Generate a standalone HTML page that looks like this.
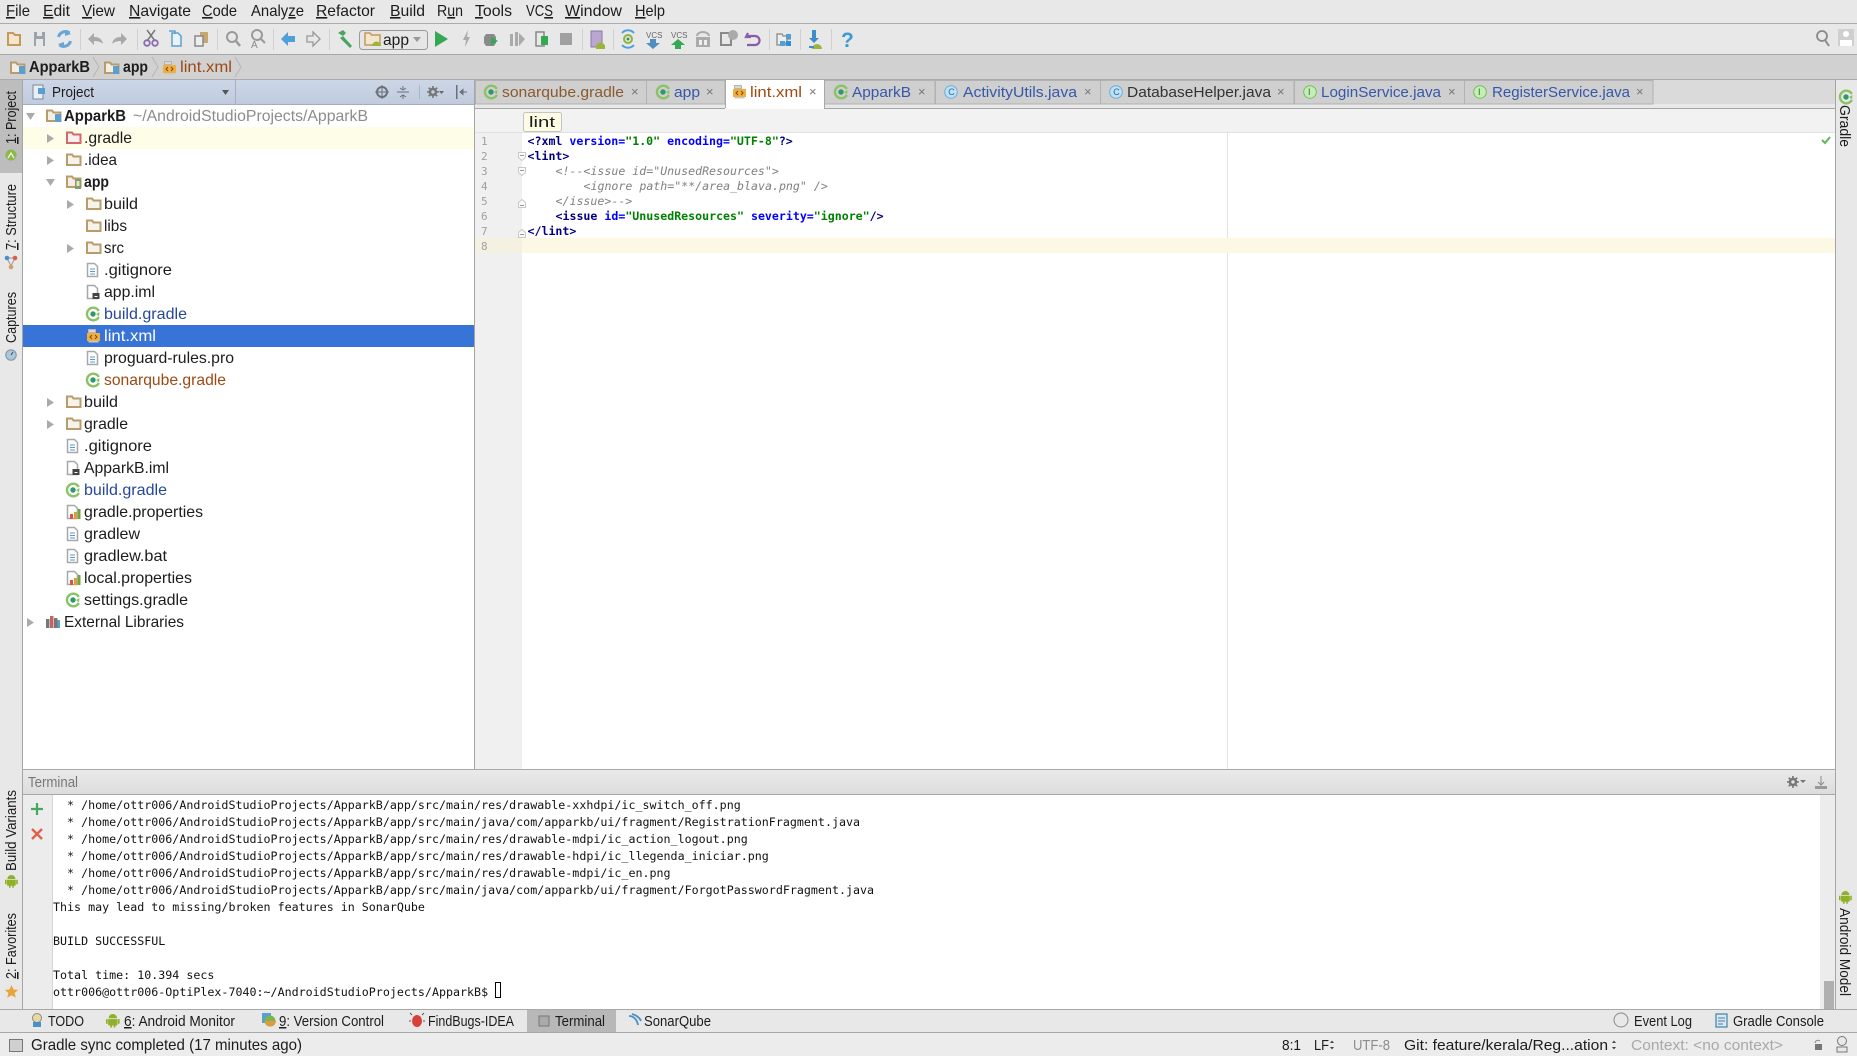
<!DOCTYPE html>
<html><head><meta charset="utf-8"><title>ApparkB</title>
<style>
html,body{margin:0;padding:0;background:#e8e8e8;width:1857px;height:1056px;overflow:hidden}
svg{display:block;filter:blur(.3px)}
text{font-family:"Liberation Sans",sans-serif;font-size:16px;fill:#1c1c1c;white-space:pre}
.m{font-family:"DejaVu Sans Mono",monospace;font-size:11.6px;fill:#000}
.t{font-family:"DejaVu Sans Mono",monospace;font-size:11.66px;fill:#111}
.b{font-weight:bold}
.g{fill:#8c8c8c}
.bl{fill:#27479c}
.br{fill:#9c4a14}
.n{fill:#000080;font-weight:bold}
.a{fill:#0000ff;font-weight:bold}
.v{fill:#008000;font-weight:bold}
.c{fill:#808080;font-style:italic}
.ln{font-family:"DejaVu Sans Mono",monospace;font-size:11px;fill:#a0a0a0}
.s{font-size:15px}
.x{font-size:13px;fill:#777}
.u{text-decoration:underline}
</style></head><body>
<svg xmlns="http://www.w3.org/2000/svg" width="1857" height="1056" viewBox="0 0 1857 1056">
<defs>
<linearGradient id="hd" x1="0" y1="0" x2="0" y2="1"><stop offset="0" stop-color="#ccd6e6"/><stop offset="1" stop-color="#bfcbde"/></linearGradient>
<linearGradient id="th" x1="0" y1="0" x2="0" y2="1"><stop offset="0" stop-color="#eaeaea"/><stop offset="1" stop-color="#dcdcdc"/></linearGradient>
<g id="fo"><path d="M1 2.500h5l1.500 2H14.500v8.500H1z" fill="#f6f3ea" stroke="#b89c6b" stroke-width="2"/></g>
<g id="for"><path d="M1 2.500h5l1.500 2H14.500v8.500H1z" fill="#fbeeee" stroke="#cf6a6a" stroke-width="2"/></g>
<g id="fom"><path d="M1 2.500h5l1.500 2H14.500v8.500H1z" fill="#f3efe4" stroke="#b89c6b" stroke-width="2"/><rect x="9" y="6" width="6" height="8" fill="#5b9fd0"/></g>
<g id="foa"><path d="M1 2.500h5l1.500 2H14.500v8.500H1z" fill="#f3efe4" stroke="#b89c6b" stroke-width="2"/><rect x="9" y="5" width="6" height="10" fill="#8a9a66"/><rect x="10.500" y="7" width="3" height="5" fill="#dfe8c9"/></g>
<g id="fi"><path d="M2.500 1.500h7l3 3v10h-10z" fill="#fff" stroke="#a8a8a8" stroke-width="1.500"/><path d="M5 7h5M5 9.500h5M5 12h5" stroke="#5a9cc8"/></g>
<g id="fm"><path d="M2.500 1.500h7l3 3v10h-10z" fill="#fff" stroke="#a8a8a8" stroke-width="1.500"/><rect x="7.500" y="9" width="7" height="6" fill="#444"/><rect x="9.500" y="12" width="3" height="1" fill="#fff"/></g>
<g id="fp"><path d="M2.500 1.500h7l3 3v10h-10z" fill="#fff" stroke="#a8a8a8" stroke-width="1.500"/><rect x="5" y="10" width="3" height="5" fill="#d9534a"/><rect x="9" y="8" width="3" height="7" fill="#e0a030"/><rect x="13" y="5" width="2.500" height="10" fill="#6aaa3a"/></g>
<g id="gr"><path d="M13.800 5A6.300 6.300 0 1 0 13.800 11" fill="none" stroke="#8cc265" stroke-width="2.400"/><path d="M14.500 6L14 10.500L11 8z" fill="#8cc265"/><circle cx="8" cy="8" r="2.700" fill="#2e9a6a"/></g>
<g id="xm"><path d="M2.500 1.500h7v3h-7z" fill="#d8d8d8" stroke="#b5b5b5"/><rect x="1" y="5" width="13" height="8" fill="#f0b040"/><path d="M6 7l-2 2 2 2M9 7l2 2-2 2" fill="none" stroke="#8a4a00" stroke-width="1.100"/><rect x="2.500" y="13" width="10" height="1.500" fill="#c8c8c8"/></g>
<g id="lib"><rect x="1" y="5" width="3.500" height="9" fill="#777"/><rect x="5" y="2" width="3.500" height="12" fill="#c0655f"/><rect x="9" y="4" width="3.500" height="10" fill="#777"/><rect x="12.500" y="6" width="2.500" height="8" fill="#5b9fd0"/></g>
<path id="ar" d="M0 0l7 4.500-7 4.500z" fill="#aaaaaa"/>
<path id="ad" d="M0 0h9l-4.500 7z" fill="#aaaaaa"/>
<g id="cc"><circle cx="7" cy="8" r="6.300" fill="#bfe0f5" stroke="#6aaed6"/><text x="4.200" y="11" style="font-size:9px;fill:#2a6a96">C</text></g>
<g id="ci"><circle cx="7" cy="8" r="6.300" fill="#c5edb8" stroke="#72bf5a"/><text x="5" y="11" style="font-size:9px;fill:#2f6a20">I</text></g>
<g id="dr"><path d="M3 5a5 5 0 0 1 10 0zM2.500 6h11v6a1.500 1.500 0 0 1-1.500 1.500H4A1.500 1.500 0 0 1 2.500 12zM0 6h2v5.500H0zM14 6h2v5.500h-2zM5 13h2v3H5zM9 13h2v3H9z" fill="#8fb128"/></g>
<g id="gear"><circle cx="7" cy="7" r="3.500" fill="none" stroke="#777" stroke-width="3"/><path d="M7 0v3M7 11v3M0 7h3M11 7h3M2 2l2 2M10 10l2 2M12 2l-2 2M4 10l-2 2" stroke="#777" stroke-width="2"/></g>
</defs>

<rect width="1857" height="1056" fill="#e8e8e8"/>

<!-- menu -->
<rect x="0" y="23" width="1857" height="1" fill="#ababab"/>
<text x="6" y="16" textLength="24" lengthAdjust="spacingAndGlyphs"><tspan class="u">F</tspan>ile</text>
<text x="43" y="16" textLength="27" lengthAdjust="spacingAndGlyphs"><tspan class="u">E</tspan>dit</text>
<text x="82" y="16" textLength="33" lengthAdjust="spacingAndGlyphs"><tspan class="u">V</tspan>iew</text>
<text x="129" y="16" textLength="62" lengthAdjust="spacingAndGlyphs"><tspan class="u">N</tspan>avigate</text>
<text x="202" y="16" textLength="35" lengthAdjust="spacingAndGlyphs"><tspan class="u">C</tspan>ode</text>
<text x="251" y="16" textLength="53" lengthAdjust="spacingAndGlyphs">Analy<tspan class="u">z</tspan>e</text>
<text x="316" y="16" textLength="59" lengthAdjust="spacingAndGlyphs"><tspan class="u">R</tspan>efactor</text>
<text x="390" y="16" textLength="35" lengthAdjust="spacingAndGlyphs"><tspan class="u">B</tspan>uild</text>
<text x="437" y="16" textLength="26" lengthAdjust="spacingAndGlyphs">R<tspan class="u">u</tspan>n</text>
<text x="475" y="16" textLength="37" lengthAdjust="spacingAndGlyphs"><tspan class="u">T</tspan>ools</text>
<text x="526" y="16" textLength="27" lengthAdjust="spacingAndGlyphs">VC<tspan class="u">S</tspan></text>
<text x="565" y="16" textLength="57" lengthAdjust="spacingAndGlyphs"><tspan class="u">W</tspan>indow</text>
<text x="635" y="16" textLength="30" lengthAdjust="spacingAndGlyphs"><tspan class="u">H</tspan>elp</text>

<!-- toolbar -->
<rect x="0" y="54" width="1857" height="1" fill="#a8a8a8"/>
<g fill="none" stroke="#d0d0d0"><path d="M80.500 29v21M137.500 29v21M217.500 29v21M273.500 29v21M329.500 29v21M582.500 29v21M613.500 29v21M769.500 29v21M800.500 29v21M831.500 29v21"/></g>
<path d="M8 33h5l2 2h5v10H8z" fill="#f3e6cc" stroke="#c49a5c" stroke-width="2"/>
<path d="M34 32h11v14H34z" fill="#9aa4ac"/><rect x="37" y="32" width="5" height="4" fill="#e8e8e8"/><rect x="36" y="39" width="7" height="7" fill="#e8e8e8"/>
<path d="M69.500 33a7 7 0 0 0-11 4M59.500 45a7 7 0 0 0 11-4" fill="none" stroke="#6aa5d8" stroke-width="3"/><path d="M65 30l6 4-6 2zM64 48l-6-4 6-2z" fill="#6aa5d8"/>
<path d="M88 39l6-6v4c5 0 8 2 9 7-2-2-5-3-9-3v4z" fill="#a8a8a8"/>
<path d="M127 39l-6-6v4c-5 0-8 2-9 7 2-2 5-3 9-3v4z" fill="#a8a8a8"/>
<path d="M147 30l8 11M155 30l-8 11" stroke="#777" stroke-width="1.500"/><circle cx="147" cy="43" r="2.800" fill="none" stroke="#8a6ab0" stroke-width="1.800"/><circle cx="155" cy="43" r="2.800" fill="none" stroke="#8a6ab0" stroke-width="1.800"/>
<path d="M172 33h6l3 3v10h-9z" fill="#e8f2fa" stroke="#5f9fcc" stroke-width="1.500"/><path d="M169 31h6v3" fill="none" stroke="#5f9fcc" stroke-width="1.500"/>
<rect x="200" y="32" width="8" height="11" fill="#c6a76e"/><path d="M195 36h8v10h-8z" fill="#eee" stroke="#888" stroke-width="1.500"/>
<circle cx="232" cy="37" r="5" fill="none" stroke="#9a9a9a" stroke-width="2"/><path d="M236 41l4 5" stroke="#9a9a9a" stroke-width="2.500"/>
<circle cx="257" cy="35" r="5" fill="none" stroke="#9a9a9a" stroke-width="2"/><path d="M261 39l4 4" stroke="#9a9a9a" stroke-width="2"/><text x="251" y="48" style="font-size:10px;fill:#888">A</text>
<path d="M281 39l7-7v4h7v6h-7v4z" fill="#4fa0d8"/>
<path d="M320 39l-7-7v4h-6v6h6v4z" fill="#e8e8e8" stroke="#999" stroke-width="1.300"/>
<path d="M338 33l5-3 3 3-3 3zM343 36l9 10-2 2-10-10z" fill="#4aa360"/>
<rect x="359.500" y="30.500" width="68" height="19" rx="3" fill="#e6e6e6" stroke="#9a9a9a"/>
<path d="M365 33h5l1.500 2H380v10h-15z" fill="#f3e6cc" stroke="#c49a5c" stroke-width="1.500"/><path d="M372 45a4.500 4.500 0 0 1 9 0z" fill="#9ab53a" transform="translate(0 1)"/>
<text x="383" y="45" textLength="26" lengthAdjust="spacingAndGlyphs">app</text>
<path d="M413 37h8l-4 5z" fill="#999"/>
<path d="M435 31l13 8-13 8z" fill="#34a853"/>
<path d="M468 30l-5 10h3l-1 7 5-10h-3z" fill="#aaa"/>
<path d="M486 34h8l2 3v6l-2 3h-8l-2-3v-6z" fill="#8a8a8a"/><path d="M491 37l7 4-7 4z" fill="#34a853"/>
<rect x="510" y="34" width="3" height="12" fill="#aaa"/><rect x="515" y="32" width="3" height="14" fill="#aaa"/><path d="M519 33l6 6-6 7z" fill="#aaa"/>
<path d="M536 32h8v14h-8z" fill="none" stroke="#888" stroke-width="1.500"/><path d="M541 36h7v9h-7z" fill="#34a853"/>
<rect x="560" y="33" width="12" height="12" fill="#a0a0a0"/>
<rect x="591" y="31" width="11" height="16" fill="#b9a7d0" stroke="#8a78a8"/><path d="M596 47a4.500 4.500 0 0 1 9 0z" fill="#9ab53a"/><rect x="596" y="45" width="9" height="4" fill="#9ab53a"/>
<path d="M634 33a8 8 0 0 0-12 0M622 45a8 8 0 0 0 12 0" fill="none" stroke="#4fa0d8" stroke-width="2"/><circle cx="628" cy="39" r="4" fill="none" stroke="#8cb53a" stroke-width="2"/><circle cx="628" cy="39" r="1.500" fill="#2e9a6a"/>
<text x="646" y="38" style="font-size:8px;fill:#666">VCS</text><path d="M650 39h6v4h4l-7 6-7-6h4z" fill="#4f8fc0"/>
<text x="671" y="38" style="font-size:8px;fill:#666">VCS</text><path d="M678 39l7 6h-4v4h-6v-4h-4z" fill="#34a853"/>
<path d="M697 36a6 4 0 0 1 12 0" fill="none" stroke="#aaa" stroke-width="2"/><rect x="696" y="37" width="14" height="10" fill="#aaa"/><rect x="699" y="40" width="3" height="5" fill="#eee"/><rect x="704" y="40" width="3" height="5" fill="#eee"/>
<rect x="721" y="33" width="10" height="12" fill="#e8e8e8" stroke="#8a8a8a" stroke-width="2"/><circle cx="733" cy="35" r="5" fill="#aaa"/>
<path d="M748 33l-2 4 5 0M747 36h8a4.500 4.500 0 0 1 0 9h-8" fill="none" stroke="#8a5ba8" stroke-width="2.200"/>
<path d="M777 34h5l1 2h7v3h-3v4h-2v2h-8z" fill="#eee" stroke="#888" stroke-width="1.300"/><rect x="786" y="34" width="5" height="5" fill="#4fa0d8"/><rect x="786" y="41" width="5" height="5" fill="#2e8fd8"/><rect x="780" y="41" width="5" height="5" fill="#4fa0d8"/>
<path d="M812 30h4v8h3l-5 5-5-5h3z" fill="#3a8fcb"/><path d="M812 47a4.500 4.500 0 0 1 10 0z" fill="#9ab53a" transform="translate(0 2)"/><rect x="809" y="46" width="5" height="2" fill="#3a8fcb"/>
<text x="841" y="47" style="font-size:21px;font-weight:bold;fill:#3a9ad8">?</text>
<circle cx="1822" cy="36" r="5" fill="none" stroke="#8a8a8a" stroke-width="1.800"/><path d="M1825 40l4 6" stroke="#8a8a8a" stroke-width="2"/>
<rect x="1838" y="29" width="16" height="17" fill="#cfcfcf"/><circle cx="1846" cy="34" r="3" fill="#fff"/><path d="M1840 46v-6h12v6z" fill="#fff"/>

<!-- breadcrumb -->
<rect x="0" y="55" width="1857" height="25" fill="#d1d1d1"/>
<rect x="0" y="79" width="1857" height="1" fill="#aaaaaa"/>
<use href="#fom" x="10" y="60"/><text class="b" x="29" y="72" textLength="61" lengthAdjust="spacingAndGlyphs">ApparkB</text>
<path d="M93 57l6 10-6 10" fill="none" stroke="#b5b5b5"/>
<use href="#fom" x="104" y="60"/><text class="b" x="123" y="72" textLength="25" lengthAdjust="spacingAndGlyphs">app</text>
<path d="M152 57l6 10-6 10" fill="none" stroke="#b5b5b5"/>
<use href="#xm" x="162" y="60"/><text class="br" x="180" y="72" textLength="52" lengthAdjust="spacingAndGlyphs">lint.xml</text>
<path d="M235 57l6 10-6 10" fill="none" stroke="#b5b5b5"/>

<!-- left strip -->
<rect x="0" y="80" width="22" height="690" fill="#e8e8e8"/>
<rect x="0" y="80" width="22" height="93" fill="#bdbdbd"/>
<rect x="22" y="80" width="1" height="930" fill="#a5a5a5"/>
<text class="s" transform="rotate(-90 16 144)" x="16" y="144" textLength="53" lengthAdjust="spacingAndGlyphs"><tspan class="u">1</tspan>: Project</text>
<circle cx="11" cy="155" r="5.500" fill="#8eb84a"/><path d="M8 158l3-5 3 5" fill="none" stroke="#eee" stroke-width="1.300"/>
<text class="s" transform="rotate(-90 16 250)" x="16" y="250" textLength="66" lengthAdjust="spacingAndGlyphs"><tspan class="u">7</tspan>: Structure</text>
<path d="M7 258L11 266L15 258z" fill="none" stroke="#999"/><circle cx="7" cy="258" r="2.300" fill="#4a90c8"/><circle cx="15" cy="258" r="2.300" fill="#d95a4a"/><circle cx="11" cy="267" r="2.300" fill="#d99a5a"/>
<text class="s" transform="rotate(-90 16 343)" x="16" y="343" textLength="51" lengthAdjust="spacingAndGlyphs">Captures</text>
<circle cx="11" cy="355" r="5.200" fill="#a8c8de" stroke="#8a9aa8" stroke-width="1.200"/><path d="M11 355l2-3" stroke="#446"/>
<text class="s" transform="rotate(-90 16 871)" x="16" y="871" textLength="81" lengthAdjust="spacingAndGlyphs">Build Variants</text>
<use href="#dr" transform="translate(5 875) scale(.8)"/>
<text class="s" transform="rotate(-90 16 979)" x="16" y="979" textLength="66" lengthAdjust="spacingAndGlyphs"><tspan class="u">2</tspan>: Favorites</text>
<path d="M11.500 985l2 4.500 4.800.4-3.700 3.100 1.200 4.700-4.300-2.500-4.300 2.500 1.200-4.700-3.700-3.100 4.800-.4z" fill="#e8a33d"/>

<!-- project panel -->
<rect x="23" y="80" width="451" height="25" fill="url(#hd)"/>
<rect x="23" y="104" width="451" height="1" fill="#a5adba"/>
<rect x="235" y="80" width="1" height="24" fill="#a6b0c0"/>
<rect x="33" y="85" width="10" height="14" fill="#e8eef5" stroke="#7a8a9a"/><rect x="38" y="88" width="7" height="6" fill="#5b9fd0"/>
<text class="s" x="52" y="97" textLength="42" lengthAdjust="spacingAndGlyphs">Project</text>
<path d="M222 90h7l-3.500 5z" fill="#555"/>
<circle cx="382" cy="92" r="5" fill="none" stroke="#6a7078" stroke-width="2"/><path d="M382 85v14M375 92h14" stroke="#6a7078"/>
<path d="M403 86v3M400 88l3 2 3-2M397 92h12M400 97l3-2 3 2M403 95v4" stroke="#6a7078" fill="none"/>
<rect x="419" y="85" width="1" height="14" fill="#aab4c2"/>
<use href="#gear" transform="translate(427 86) scale(.85)"/><path d="M439 91h5l-2.500 3z" fill="#666"/>
<rect x="456" y="85" width="1.500" height="14" fill="#6a7078"/><path d="M460 92h7M460 92l3-2.500v5z" stroke="#6a7078" fill="#6a7078"/>

<rect x="23" y="105" width="451" height="665" fill="#fff"/>
<rect x="23" y="127" width="451" height="22" fill="#fdfde8"/>
<rect x="23" y="325" width="451" height="22" fill="#3874d7"/>
<rect x="474" y="80" width="1" height="690" fill="#a5a5a5"/>

<use href="#ad" x="26" y="113"/><use href="#fom" x="46" y="108"/>
<text class="b" x="64" y="121" textLength="62" lengthAdjust="spacingAndGlyphs">ApparkB</text>
<text class="g" x="133" y="121" textLength="235" lengthAdjust="spacingAndGlyphs">~/AndroidStudioProjects/ApparkB</text>
<use href="#ar" x="47" y="134"/><use href="#for" x="66" y="130"/><text x="84" y="143" textLength="48" lengthAdjust="spacingAndGlyphs">.gradle</text>
<use href="#ar" x="47" y="156"/><use href="#fo" x="66" y="152"/><text x="84" y="165" textLength="33" lengthAdjust="spacingAndGlyphs">.idea</text>
<use href="#ad" x="46" y="179"/><use href="#foa" x="66" y="174"/><text class="b" x="84" y="187" textLength="25" lengthAdjust="spacingAndGlyphs">app</text>
<use href="#ar" x="67" y="200"/><use href="#fo" x="86" y="196"/><text x="104" y="209" textLength="34" lengthAdjust="spacingAndGlyphs">build</text>
<use href="#fo" x="86" y="218"/><text x="104" y="231" textLength="23" lengthAdjust="spacingAndGlyphs">libs</text>
<use href="#ar" x="67" y="244"/><use href="#fo" x="86" y="240"/><text x="104" y="253" textLength="20" lengthAdjust="spacingAndGlyphs">src</text>
<use href="#fi" x="85" y="262"/><text x="104" y="275" textLength="68" lengthAdjust="spacingAndGlyphs">.gitignore</text>
<use href="#fm" x="85" y="284"/><text x="104" y="297" textLength="51" lengthAdjust="spacingAndGlyphs">app.iml</text>
<use href="#gr" x="85" y="306"/><text class="bl" x="104" y="319" textLength="83" lengthAdjust="spacingAndGlyphs">build.gradle</text>
<use href="#xm" x="86" y="328"/><text style="fill:#fff" x="104" y="341" textLength="52" lengthAdjust="spacingAndGlyphs">lint.xml</text>
<use href="#fi" x="85" y="350"/><text x="104" y="363" textLength="130" lengthAdjust="spacingAndGlyphs">proguard-rules.pro</text>
<use href="#gr" x="85" y="372"/><text class="br" x="104" y="385" textLength="122" lengthAdjust="spacingAndGlyphs">sonarqube.gradle</text>
<use href="#ar" x="47" y="398"/><use href="#fo" x="66" y="394"/><text x="84" y="407" textLength="34" lengthAdjust="spacingAndGlyphs">build</text>
<use href="#ar" x="47" y="420"/><use href="#fo" x="66" y="416"/><text x="84" y="429" textLength="44" lengthAdjust="spacingAndGlyphs">gradle</text>
<use href="#fi" x="65" y="438"/><text x="84" y="451" textLength="68" lengthAdjust="spacingAndGlyphs">.gitignore</text>
<use href="#fm" x="65" y="460"/><text x="84" y="473" textLength="85" lengthAdjust="spacingAndGlyphs">ApparkB.iml</text>
<use href="#gr" x="65" y="482"/><text class="bl" x="84" y="495" textLength="83" lengthAdjust="spacingAndGlyphs">build.gradle</text>
<use href="#fp" x="65" y="504"/><text x="84" y="517" textLength="119" lengthAdjust="spacingAndGlyphs">gradle.properties</text>
<use href="#fi" x="65" y="526"/><text x="84" y="539" textLength="56" lengthAdjust="spacingAndGlyphs">gradlew</text>
<use href="#fi" x="65" y="548"/><text x="84" y="561" textLength="83" lengthAdjust="spacingAndGlyphs">gradlew.bat</text>
<use href="#fp" x="65" y="570"/><text x="84" y="583" textLength="108" lengthAdjust="spacingAndGlyphs">local.properties</text>
<use href="#gr" x="65" y="592"/><text x="84" y="605" textLength="104" lengthAdjust="spacingAndGlyphs">settings.gradle</text>
<use href="#ar" x="27" y="618"/><use href="#lib" x="45" y="614"/><text x="64" y="627" textLength="120" lengthAdjust="spacingAndGlyphs">External Libraries</text>

<!-- tabs -->
<rect x="475" y="80" width="1360" height="24" fill="#dadada"/>
<rect x="475" y="104" width="1360" height="4" fill="#e9e9e9"/>
<rect x="475" y="108" width="1360" height="1" fill="#a6a6a6"/>
<g fill="#cfcfcf" stroke="#b2b2b2">
<path d="M475.500 80.500h171v23.500h-171z"/><path d="M646.500 80.500h78.500v23.500h-78.500z"/><path d="M824.500 80.500h110.500v23.500h-110.500z"/><path d="M935.500 80.500h165v23.500h-165z"/><path d="M1100.500 80.500h193.500v23.500h-193.500z"/><path d="M1294.500 80.500h170v23.500h-170z"/><path d="M1464.500 80.500h188.500v23.500h-188.500z"/>
</g>
<rect x="725" y="80" width="99" height="29" fill="#fff"/>
<rect x="725" y="80" width="1" height="28" fill="#a8a8a8"/><rect x="824" y="80" width="1" height="28" fill="#a8a8a8"/>
<use href="#gr" x="483" y="84"/><text class="s" style="fill:#8a5a2e" x="502" y="97" textLength="122" lengthAdjust="spacingAndGlyphs">sonarqube.gradle</text><text class="x" x="631" y="96">×</text>
<use href="#gr" x="655" y="84"/><text class="s" style="fill:#3558a8" x="674" y="97" textLength="26" lengthAdjust="spacingAndGlyphs">app</text><text class="x" x="706" y="96">×</text>
<use href="#xm" x="732" y="84"/><text class="s" style="fill:#a04a12" x="750" y="97" textLength="52" lengthAdjust="spacingAndGlyphs">lint.xml</text><text class="x" x="809" y="96">×</text>
<use href="#gr" x="833" y="84"/><text class="s" style="fill:#3558a8" x="852" y="97" textLength="59" lengthAdjust="spacingAndGlyphs">ApparkB</text><text class="x" x="918" y="96">×</text>
<use href="#cc" x="944" y="84"/><text class="s" style="fill:#3558a8" x="963" y="97" textLength="114" lengthAdjust="spacingAndGlyphs">ActivityUtils.java</text><text class="x" x="1084" y="96">×</text>
<use href="#cc" x="1109" y="84"/><text class="s" style="fill:#333" x="1127" y="97" textLength="144" lengthAdjust="spacingAndGlyphs">DatabaseHelper.java</text><text class="x" x="1277" y="96">×</text>
<use href="#ci" x="1303" y="84"/><text class="s" style="fill:#3558a8" x="1321" y="97" textLength="120" lengthAdjust="spacingAndGlyphs">LoginService.java</text><text class="x" x="1448" y="96">×</text>
<use href="#ci" x="1473" y="84"/><text class="s" style="fill:#3558a8" x="1492" y="97" textLength="138" lengthAdjust="spacingAndGlyphs">RegisterService.java</text><text class="x" x="1636" y="96">×</text>

<!-- editor -->
<rect x="475" y="109" width="1360" height="24" fill="#f2f2f2"/>
<rect x="475" y="132" width="1360" height="1" fill="#e2e2e2"/>
<rect x="523.500" y="112.500" width="38" height="19" rx="2" fill="#fdfbe4" stroke="#c4c4c4"/>
<text class="s" x="529" y="127" textLength="26" lengthAdjust="spacingAndGlyphs">lint</text>
<rect x="475" y="133" width="47" height="637" fill="#f0f0f0"/>
<rect x="522" y="133" width="1313" height="637" fill="#fff"/>
<rect x="1227" y="133" width="1" height="637" fill="#e2e2e2"/>
<rect x="475" y="238" width="47" height="15" fill="#f4f1e2"/>
<rect x="522" y="238" width="1313" height="15" fill="#fcf8e3"/>
<path d="M1822 140l3 3 5-6" fill="none" stroke="#5cb85c" stroke-width="2"/>
<text class="ln" x="481" y="145">1</text><text class="ln" x="481" y="160">2</text><text class="ln" x="481" y="175">3</text><text class="ln" x="481" y="190">4</text><text class="ln" x="481" y="205">5</text><text class="ln" x="481" y="220">6</text><text class="ln" x="481" y="235">7</text><text class="ln" x="481" y="250">8</text>
<g fill="#fafafa" stroke="#c8c8c8"><path d="M518.500 152.500h7v5l-3.500 3-3.500-3z"/><path d="M518.500 167.500h7v5l-3.500 3-3.500-3z"/><path d="M518.500 202.500l3.500-3 3.500 3v5h-7z"/><path d="M518.500 232.500l3.500-3 3.500 3v5h-7z"/></g>
<path d="M520 155.500h4M520 170.500h4M520 205.500h4M520 234.500h4" stroke="#999"/>
<text class="m" x="527.500" y="145"><tspan class="n">&lt;?xml </tspan><tspan class="a">version=</tspan><tspan class="v">"1.0" </tspan><tspan class="a">encoding=</tspan><tspan class="v">"UTF-8"</tspan><tspan class="n">?&gt;</tspan></text>
<text class="m n" x="527.500" y="160">&lt;lint&gt;</text>
<text class="m c" x="555.500" y="175">&lt;!--&lt;issue id="UnusedResources"&gt;</text>
<text class="m c" x="583.500" y="190">&lt;ignore path="**/area_blava.png" /&gt;</text>
<text class="m c" x="555.500" y="205">&lt;/issue&gt;--&gt;</text>
<text class="m" x="555.500" y="220"><tspan class="n">&lt;issue </tspan><tspan class="a">id=</tspan><tspan class="v">"UnusedResources" </tspan><tspan class="a">severity=</tspan><tspan class="v">"ignore"</tspan><tspan class="n">/&gt;</tspan></text>
<text class="m n" x="527.500" y="235">&lt;/lint&gt;</text>

<!-- right strip -->
<rect x="1835" y="80" width="1" height="930" fill="#a5a5a5"/>
<use href="#gr" x="1838" y="89"/>
<text class="s" transform="rotate(90 1840 105)" x="1840" y="105" textLength="42" lengthAdjust="spacingAndGlyphs">Gradle</text>
<use href="#dr" transform="translate(1839 891) scale(.8)"/>
<text class="s" transform="rotate(90 1840 908)" x="1840" y="908" textLength="88" lengthAdjust="spacingAndGlyphs">Android Model</text>

<!-- terminal -->
<rect x="23" y="769" width="1812" height="1" fill="#a8a8a8"/>
<rect x="23" y="770" width="1812" height="24" fill="url(#th)"/>
<rect x="23" y="794" width="1812" height="1" fill="#a8a8a8"/>
<text class="s" style="fill:#777" x="28" y="787" textLength="50" lengthAdjust="spacingAndGlyphs">Terminal</text>
<use href="#gear" transform="translate(1787 776) scale(.85)"/><path d="M1800 780h6l-3 3z" fill="#777"/>
<path d="M1821 776v9M1818 782l3 3 3-3" stroke="#888" fill="none"/><rect x="1815" y="786" width="12" height="3" fill="#999"/>
<rect x="23" y="795" width="29" height="214" fill="#ececec"/>
<rect x="52" y="795" width="1" height="214" fill="#d4d4d4"/>
<rect x="53" y="795" width="1767" height="214" fill="#fff"/>
<rect x="1820" y="795" width="15" height="214" fill="#ececec"/>
<rect x="1824" y="981" width="10" height="28" fill="#b0b0b0"/>
<path d="M37 803v12M31 809h12" stroke="#45a85a" stroke-width="2.200"/>
<path d="M32 829l10 10M42 829l-10 10" stroke="#e0604a" stroke-width="2.400"/>
<text class="t" x="53" y="809">  * /home/ottr006/AndroidStudioProjects/ApparkB/app/src/main/res/drawable-xxhdpi/ic_switch_off.png</text>
<text class="t" x="53" y="826">  * /home/ottr006/AndroidStudioProjects/ApparkB/app/src/main/java/com/apparkb/ui/fragment/RegistrationFragment.java</text>
<text class="t" x="53" y="843">  * /home/ottr006/AndroidStudioProjects/ApparkB/app/src/main/res/drawable-mdpi/ic_action_logout.png</text>
<text class="t" x="53" y="860">  * /home/ottr006/AndroidStudioProjects/ApparkB/app/src/main/res/drawable-hdpi/ic_llegenda_iniciar.png</text>
<text class="t" x="53" y="877">  * /home/ottr006/AndroidStudioProjects/ApparkB/app/src/main/res/drawable-mdpi/ic_en.png</text>
<text class="t" x="53" y="894">  * /home/ottr006/AndroidStudioProjects/ApparkB/app/src/main/java/com/apparkb/ui/fragment/ForgotPasswordFragment.java</text>
<text class="t" x="53" y="911">This may lead to missing/broken features in SonarQube</text>
<text class="t" x="53" y="945">BUILD SUCCESSFUL</text>
<text class="t" x="53" y="979">Total time: 10.394 secs</text>
<text class="t" x="53" y="996">ottr006@ottr006-OptiPlex-7040:~/AndroidStudioProjects/ApparkB$</text>
<rect x="495.500" y="982.500" width="5" height="15" fill="#fff" stroke="#000"/>

<!-- tool window bar -->
<rect x="0" y="1009" width="1857" height="1" fill="#a8a8a8"/>
<rect x="0" y="1010" width="1857" height="22" fill="#e8e8e8"/>
<rect x="0" y="1032" width="1857" height="1" fill="#a8a8a8"/>
<rect x="527" y="1010" width="89" height="22" fill="#b8b8b8"/>
<circle cx="37" cy="1018" r="4.500" fill="#e8d8a0" stroke="#8a8a8a"/><rect x="33" y="1022" width="8" height="5" fill="#4a90c8"/>
<text class="s" x="48" y="1026" textLength="36" lengthAdjust="spacingAndGlyphs">TODO</text>
<use href="#dr" transform="translate(106 1014) scale(.85)"/>
<text class="s" x="124" y="1026" textLength="111" lengthAdjust="spacingAndGlyphs"><tspan class="u">6</tspan>: Android Monitor</text>
<rect x="262" y="1013" width="9" height="10" fill="#5b9fd0"/><circle cx="270" cy="1021" r="5.500" fill="#7ab648"/><path d="M265 1021a5.500 5.500 0 0 0 11 0z" fill="#e09a40"/>
<text class="s" x="279" y="1026" textLength="105" lengthAdjust="spacingAndGlyphs"><tspan class="u">9</tspan>: Version Control</text>
<ellipse cx="417" cy="1021" rx="5" ry="6" fill="#d8403a"/><path d="M412 1015l-2-2M422 1015l2-2M411 1021h-2M423 1021h2" stroke="#555"/>
<text class="s" x="428" y="1026" textLength="86" lengthAdjust="spacingAndGlyphs">FindBugs-IDEA</text>
<rect x="539" y="1016" width="10" height="10" fill="#aaa" stroke="#777"/>
<text class="s" x="555" y="1026" textLength="50" lengthAdjust="spacingAndGlyphs">Terminal</text>
<path d="M629 1016c4 0 8 3 9 9M632 1014c4 1 8 4 9 7" fill="none" stroke="#4a90c8" stroke-width="1.800"/>
<text class="s" x="644" y="1026" textLength="67" lengthAdjust="spacingAndGlyphs">SonarQube</text>
<circle cx="1621" cy="1020" r="7" fill="none" stroke="#8a8a8a"/>
<text class="s" x="1634" y="1026" textLength="58" lengthAdjust="spacingAndGlyphs">Event Log</text>
<rect x="1716" y="1014" width="11" height="13" fill="#dbe8f2" stroke="#4a8ab0" stroke-width="1.300"/><path d="M1718 1018h7M1718 1021h7M1718 1024h5" stroke="#4a7a9a"/>
<text class="s" x="1733" y="1026" textLength="91" lengthAdjust="spacingAndGlyphs">Gradle Console</text>

<!-- status bar -->
<rect x="0" y="1033" width="1857" height="23" fill="#ececec"/>
<rect x="9.500" y="1039.500" width="13" height="12" fill="#d0d0d0" stroke="#777"/>
<text x="31" y="1050" textLength="271" lengthAdjust="spacingAndGlyphs">Gradle sync completed (17 minutes ago)</text>
<text class="s" x="1282" y="1050" textLength="19" lengthAdjust="spacingAndGlyphs">8:1</text>
<text class="s" x="1314" y="1050" textLength="15" lengthAdjust="spacingAndGlyphs">LF</text>
<path d="M1330 1043l2-2.500 2 2.500zM1330 1047l2 2.500 2-2.500z" fill="#444"/>
<text class="s g" x="1353" y="1050" textLength="37" lengthAdjust="spacingAndGlyphs">UTF-8</text>
<text class="s" x="1404" y="1050" textLength="204" lengthAdjust="spacingAndGlyphs">Git: feature/kerala/Reg...ation</text>
<path d="M1612 1043l2-2.500 2 2.500zM1612 1047l2 2.500 2-2.500z" fill="#444"/>
<text class="s" style="fill:#a8a8a8" x="1631" y="1050" textLength="152" lengthAdjust="spacingAndGlyphs">Context: &lt;no context&gt;</text>
<path d="M1815 1043a3 3 0 0 1 5-2" fill="none" stroke="#888"/><rect x="1815" y="1044" width="7" height="6" fill="#777"/>
<circle cx="1842" cy="1041" r="4.500" fill="#e8e8e8" stroke="#777"/><path d="M1837 1052v-5h10v5z" fill="#e8e8e8" stroke="#777"/>
</svg>
</body></html>
